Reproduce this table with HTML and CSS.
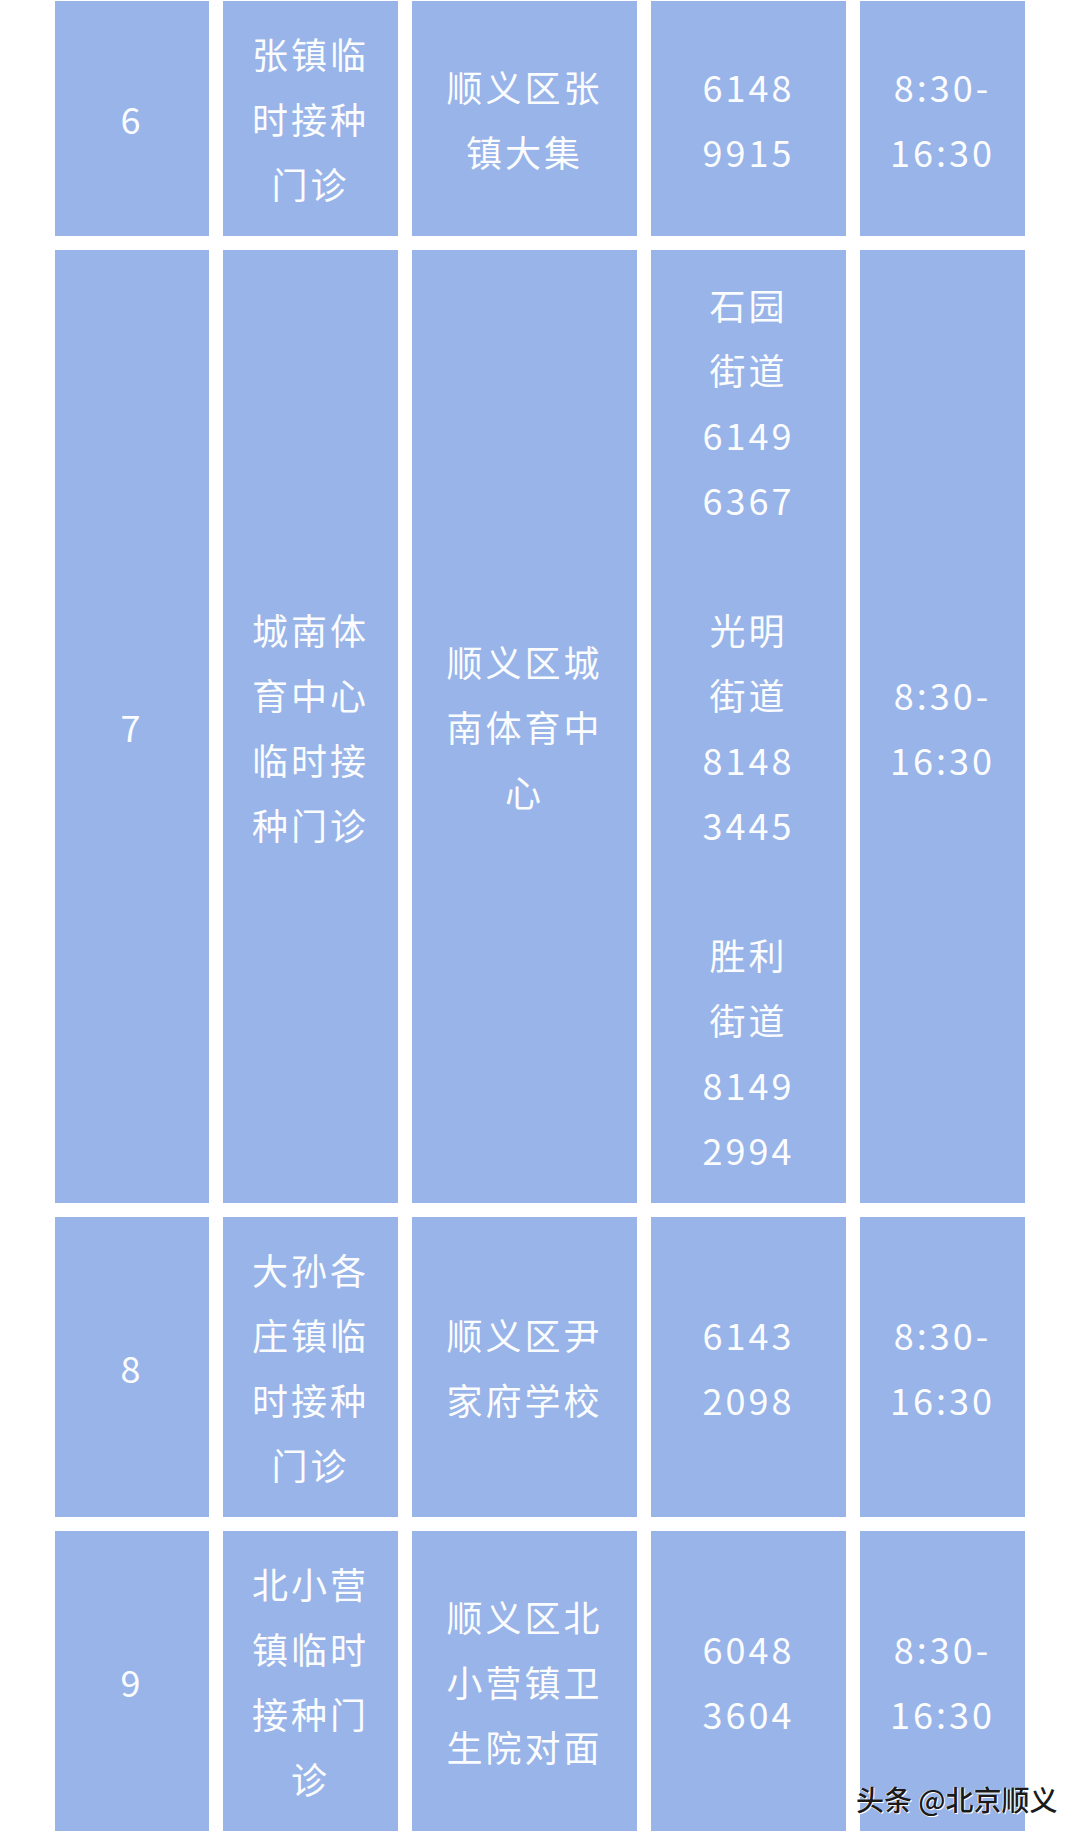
FILE: index.html
```html
<!DOCTYPE html>
<html lang="zh-CN">
<head>
<meta charset="utf-8">
<title>顺义区临时接种门诊</title>
<link rel="stylesheet" href="styles.css">
</head>
<body>
<div class="page">
  <div class="table">
    <div class="cell">6</div>
    <div class="cell">张镇临<br>时接种<br>门诊</div>
    <div class="cell">顺义区张<br>镇大集</div>
    <div class="cell">6148<br>9915</div>
    <div class="cell">8:30-<br>16:30</div>

    <div class="cell">7</div>
    <div class="cell">城南体<br>育中心<br>临时接<br>种门诊</div>
    <div class="cell">顺义区城<br>南体育中<br>心</div>
    <div class="cell">石园<br>街道<br>6149<br>6367<br><br>光明<br>街道<br>8148<br>3445<br><br>胜利<br>街道<br>8149<br>2994</div>
    <div class="cell">8:30-<br>16:30</div>

    <div class="cell">8</div>
    <div class="cell">大孙各<br>庄镇临<br>时接种<br>门诊</div>
    <div class="cell">顺义区尹<br>家府学校</div>
    <div class="cell">6143<br>2098</div>
    <div class="cell">8:30-<br>16:30</div>

    <div class="cell">9</div>
    <div class="cell">北小营<br>镇临时<br>接种门<br>诊</div>
    <div class="cell">顺义区北<br>小营镇卫<br>生院对面</div>
    <div class="cell">6048<br>3604</div>
    <div class="cell">8:30-<br>16:30</div>
  </div>
  <div class="watermark">头条 @北京顺义</div>
</div>
</body>
</html>
```

FILE: styles.css
```css
html, body {
  margin: 0;
  padding: 0;
  background: #ffffff;
}

.page {
  position: relative;
  width: 1080px;
  height: 1843px;
  padding: 1px 0 0 55px;
  box-sizing: border-box;
}

.table {
  display: grid;
  grid-template-columns: 154px 175px 225px 195px 165px;
  grid-template-rows: 235px 953px 300px 300px;
  column-gap: 14px;
  row-gap: 14px;
}

.cell {
  background: #98b4e8;
  color: #fbfcfe;
  font-family: "Noto Sans CJK SC", "Noto Sans", sans-serif;
  font-size: 36px;
  line-height: 65px;
  letter-spacing: 3px;
  text-align: center;
  display: flex;
  align-items: center;
  justify-content: center;
}

.watermark {
  position: absolute;
  left: 856px;
  top: 1781px;
  font-family: "Noto Sans CJK SC", sans-serif;
  font-size: 28px;
  font-weight: 500;
  line-height: 36px;
  color: #1a1a1a;
  text-shadow: 1px 1px 0 #ffffff, -1px 0 0 rgba(255,255,255,0.7);
  white-space: nowrap;
}
```
